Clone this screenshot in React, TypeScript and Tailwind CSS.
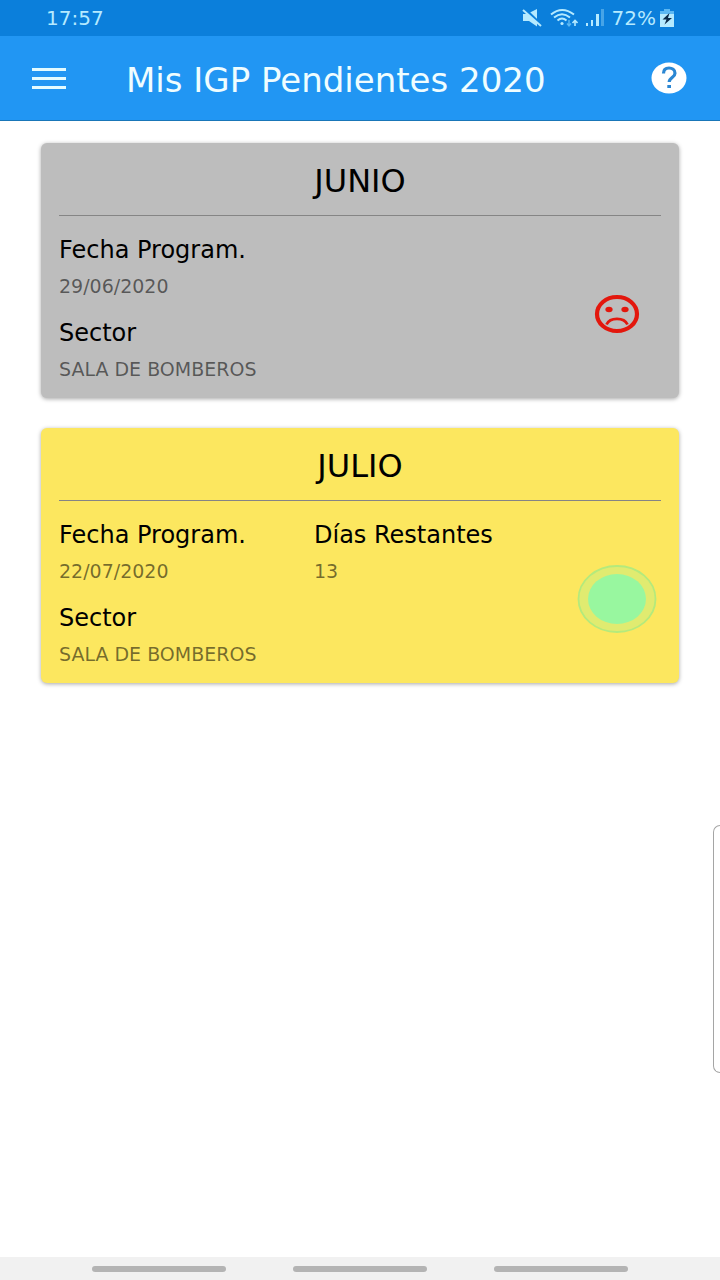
import { clsx } from "clsx";

type Inspection = {
  month: string;
  date: string;
  sector: string;
  daysLeft?: number;
};

const inspections: Inspection[] = [
  { month: "JUNIO", date: "29/06/2020", sector: "SALA DE BOMBEROS" },
  { month: "JULIO", date: "22/07/2020", sector: "SALA DE BOMBEROS", daysLeft: 13 },
];

function StatusBar() {
  return (
    <div className="flex h-9 items-center justify-between bg-[#0b7fdb] pr-[46px] pl-[46px] text-xl text-[#b5eaff]">
      <span>17:57</span>
      <div className="flex items-center gap-2">
        {/* Muted speaker */}
        <svg width="20" height="20" viewBox="0 0 20 20" fill="currentColor">
          <path d="M8 4.500L15 1v10z" />
          <path d="M2 1l17 17" stroke="#0b7fdb" strokeWidth="4" />
          <path d="M1 6h5l9 9v3.500L7 13H1z" />
          <path d="M1 2l18 16" stroke="currentColor" strokeWidth="2" />
        </svg>
        {/* Wifi */}
        <svg width="28" height="20" viewBox="0 0 28 20" fill="none" stroke="currentColor" strokeWidth="2">
          <path d="M1 6.500Q12-2.500 24 6.500" />
          <path d="M4 9.500Q12 3 20 9.500" />
          <path d="M7.500 12.500Q12 8.500 16.500 12.500" />
          <circle cx="12" cy="15.500" r="1.600" fill="currentColor" stroke="none" />
          <path d="M19 12v6m-2-2.500l2 2.500 2-2.500" stroke="#5cb8f3" strokeWidth="1.400" />
          <path d="M25 18v-5m-2.500 2L25 12.500l2.500 2.500" strokeWidth="1.600" />
        </svg>
        {/* Signal */}
        <svg width="18" height="20" viewBox="0 0 18 20" fill="currentColor">
          <path d="M0 15h2v3H0zM5 12h2v6H5zM10 6h3v12h-3z" />
          <path d="M15 1h3v17h-3z" opacity=".35" />
        </svg>
        <span>72%</span>
        {/* Charging battery */}
        <svg className="-ml-1" width="14" height="18" viewBox="0 0 14 18">
          <path d="M4 0h6v2h4v4H0V2h4z" fill="#5cb8f3" />
          <path d="M0 5h14v13H0z" fill="currentColor" />
          <path d="M9.500 4L2.500 10.500h4L4.500 15.500l7.500-6.500H8z" fill="#0b2a4a" />
        </svg>
      </div>
    </div>
  );
}

function Header() {
  return (
    <header className="flex h-[85px] items-center border-b border-[#1976b8] bg-[#2196f3] pr-[33px] pl-8 text-[#effdff]">
      <button type="button" aria-label="Menú" className="flex flex-col gap-[6px]">
        <span className="h-[3px] w-[34px] bg-[#e3fbff]" />
        <span className="h-[3px] w-[34px] bg-[#e3fbff]" />
        <span className="h-[3px] w-[34px] bg-[#e3fbff]" />
      </button>
      <h1 className="ml-[60px] flex-1 pt-1 text-[34px] whitespace-nowrap">Mis IGP Pendientes 2020</h1>
      <button type="button" aria-label="Ayuda">
        <svg width="36" height="32" viewBox="0 0 36 32">
          <ellipse cx="18" cy="16" rx="17.500" ry="15.500" fill="#fff" />
          <path d="M12.500 11.500C12.500 7.500 15 6 18 6s6 1.700 6 5.200c0 4.300-5.800 4.300-5.800 8.800" fill="none" stroke="#2b87d3" strokeWidth="3.200" />
          <path d="M16.300 23h3.700v3h-3.700z" fill="#2b87d3" />
        </svg>
      </button>
    </header>
  );
}

function Field({ label, value }: { label: string; value: string | number }) {
  return (
    <div>
      <dt className="text-2xl leading-9 text-black">{label}</dt>
      <dd className="text-[19px] leading-9 text-black/55">{value}</dd>
    </div>
  );
}

function SadFace() {
  return (
    <svg width="46" height="40" viewBox="0 0 46 40" fill="none" stroke="#e3170d">
      <ellipse cx="23" cy="20" rx="20" ry="17" strokeWidth="4.200" />
      <ellipse cx="15" cy="15.500" rx="3.600" ry="2.800" fill="#e3170d" stroke="none" />
      <ellipse cx="31" cy="15.500" rx="3.600" ry="2.800" fill="#e3170d" stroke="none" />
      <path d="M12.500 30.500C16 23 30 23 33.500 30.500" strokeWidth="2.800" />
    </svg>
  );
}

function PulseDot() {
  return (
    <svg width="80" height="68" viewBox="0 0 80 68">
      <ellipse cx="40" cy="34" rx="38.500" ry="33" fill="#98f79f" fillOpacity=".28" stroke="#b4ea7c" strokeWidth="1.800" />
      <ellipse cx="40" cy="34" rx="29" ry="25" fill="#98f79f" />
    </svg>
  );
}

function InspectionCard({ month, date, sector, daysLeft }: Inspection) {
  const pending = daysLeft !== undefined;
  return (
    <article
      className={clsx(
        "rounded-md px-[18px] pb-[11px] shadow-[0_1px_4px_rgba(0,0,0,0.35)]",
        pending ? "bg-[#fce75f]" : "bg-[#bdbdbd]"
      )}
    >
      <h2 className="border-b border-[#858585] pt-1 text-center text-[32px] leading-[68px] text-black">{month}</h2>
      <div className="grid grid-cols-[255fr_259fr_88fr] pt-4">
        <dl className="flex flex-col gap-[11px] whitespace-nowrap">
          <Field label="Fecha Program." value={date} />
          <Field label="Sector" value={sector} />
        </dl>
        <dl className="whitespace-nowrap">
          {pending && <Field label="Días Restantes" value={daysLeft} />}
        </dl>
        <div className="flex items-center justify-center pt-2">{pending ? <PulseDot /> : <SadFace />}</div>
      </div>
    </article>
  );
}

export default function App() {
  return (
    <div className="relative flex min-h-screen flex-col overflow-hidden bg-white font-['DejaVu_Sans',sans-serif]">
      <StatusBar />
      <Header />
      <main className="flex flex-1 flex-col gap-[30px] px-[41px] pt-[22px]">
        {inspections.map((item) => (
          <InspectionCard key={item.month} {...item} />
        ))}
      </main>
      {/* Edge panel handle, it hangs over the right side */}
      <div className="absolute top-[825px] right-0 h-[248px] w-[7px] rounded-l-[7px] border border-r-0 border-[#a5a5a5] bg-white" />
      <nav className="flex h-[23px] items-center justify-center gap-[67px] bg-[#f1f1f1]">
        <button type="button" aria-label="Recientes" className="h-[6px] w-[134px] rounded-full bg-[#b4b4b4]" />
        <button type="button" aria-label="Inicio" className="h-[6px] w-[134px] rounded-full bg-[#b4b4b4]" />
        <button type="button" aria-label="Atrás" className="h-[6px] w-[134px] rounded-full bg-[#b4b4b4]" />
      </nav>
    </div>
  );
}
